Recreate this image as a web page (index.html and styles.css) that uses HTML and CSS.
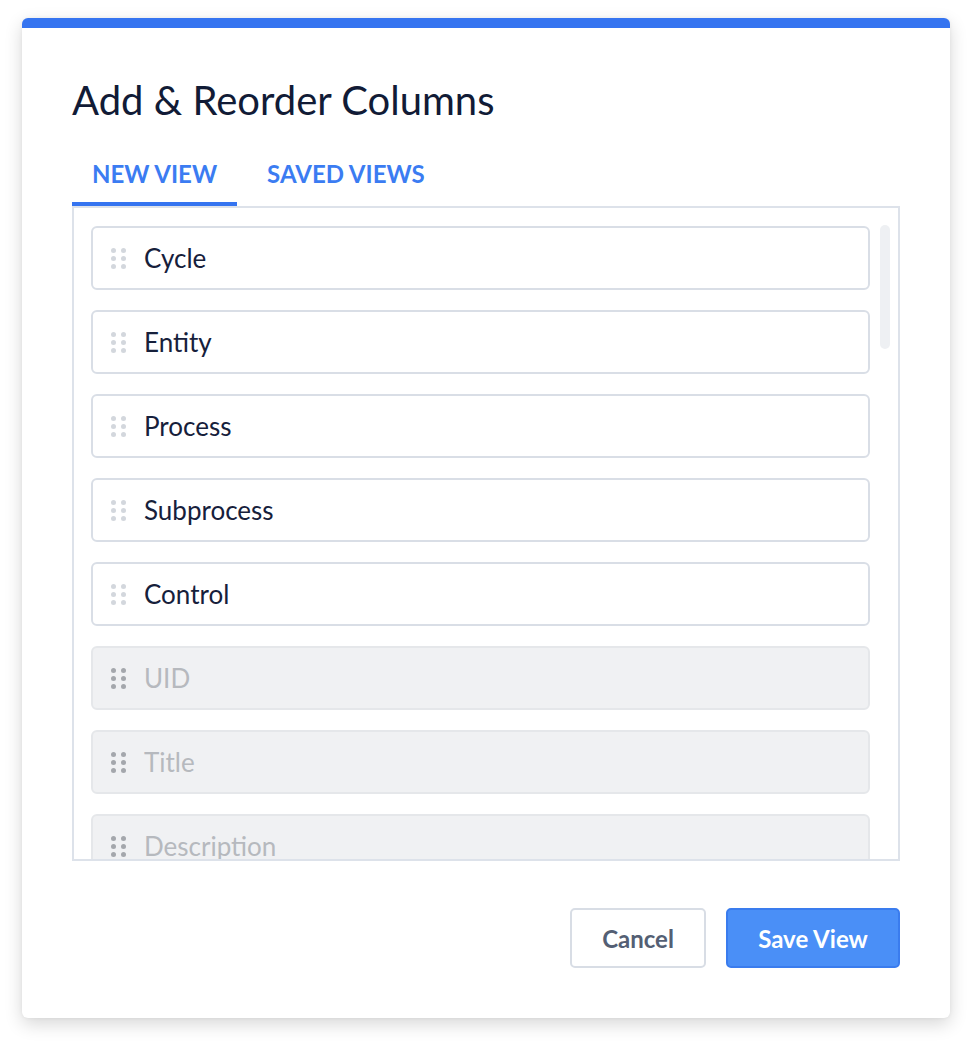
FILE: index.html
```html
<!DOCTYPE html>
<html lang="en">
<head>
<meta charset="utf-8">
<title>Add &amp; Reorder Columns</title>
<link rel="stylesheet" href="styles.css">
</head>
<body>
<div class="page">
  <div class="modal">
    <h1 class="title">Add &amp; Reorder Columns</h1>
    <div class="tabs">
      <div class="tab active">NEW VIEW</div>
      <div class="tab">SAVED VIEWS</div>
    </div>
    <div class="list-box">
      <ul class="list">
        <li class="item"><span class="handle"><i></i><i></i><i></i><i></i><i></i><i></i></span><span class="label">Cycle</span></li>
        <li class="item"><span class="handle"><i></i><i></i><i></i><i></i><i></i><i></i></span><span class="label">Entity</span></li>
        <li class="item"><span class="handle"><i></i><i></i><i></i><i></i><i></i><i></i></span><span class="label">Process</span></li>
        <li class="item"><span class="handle"><i></i><i></i><i></i><i></i><i></i><i></i></span><span class="label">Subprocess</span></li>
        <li class="item"><span class="handle"><i></i><i></i><i></i><i></i><i></i><i></i></span><span class="label">Control</span></li>
        <li class="item off"><span class="handle"><i></i><i></i><i></i><i></i><i></i><i></i></span><span class="label">UID</span></li>
        <li class="item off"><span class="handle"><i></i><i></i><i></i><i></i><i></i><i></i></span><span class="label">Title</span></li>
        <li class="item off"><span class="handle"><i></i><i></i><i></i><i></i><i></i><i></i></span><span class="label">Description</span></li>
      </ul>
      <div class="thumb"></div>
    </div>
    <div class="actions">
      <button class="btn btn-cancel">Cancel</button>
      <button class="btn btn-save">Save View</button>
    </div>
  </div>
</div>
</body>
</html>
```
FILE: styles.css
```css
html, body {
  margin: 0;
  padding: 0;
  background: #ffffff;
}
body {
  font-family: Lato, "Noto Sans", sans-serif;
}
.page {
  padding: 18px 22px 26px 22px;
}
.modal {
  box-sizing: border-box;
  width: 928px;
  height: 1000px;
  background: #ffffff;
  border-top: 10px solid #3574f0;
  border-radius: 6px;
  box-shadow: 0 6px 18px rgba(0, 0, 0, 0.16), 0 0 4px rgba(0, 0, 0, 0.05);
  padding: 0 50px;
  display: flex;
  flex-direction: column;
}
.title {
  margin: 48px 0 0 0;
  font-size: 40px;
  line-height: 48px;
  font-weight: 400;
  color: #111b36;
  letter-spacing: 0;
}
.tabs {
  display: flex;
  margin-top: 24px;
}
.tab {
  padding: 12px 20px 14px 20px;
  font-size: 24px;
  line-height: 28px;
  font-weight: 700;
  color: #3b7cf2;
  border-bottom: 4px solid transparent;
  margin-right: 10px;
}
.tab.active {
  border-bottom-color: #3574f0;
}
.list-box {
  position: relative;
  box-sizing: border-box;
  height: 655px;
  border: 2px solid #dde2ea;
  overflow: hidden;
}
.list {
  list-style: none;
  margin: 0;
  padding: 18px 28px 0 17px;
  display: flex;
  flex-direction: column;
  gap: 20px;
}
.item {
  box-sizing: border-box;
  height: 64px;
  flex: 0 0 64px;
  border: 2px solid #d9dee6;
  border-radius: 6px;
  background: #ffffff;
  display: flex;
  align-items: center;
  padding-left: 18px;
}
.item.off {
  background: #f0f1f3;
  border-color: #e5e7ea;
}
.handle {
  display: grid;
  grid-template-columns: 5px 5px;
  grid-template-rows: 5px 5px 5px;
  column-gap: 5px;
  row-gap: 3px;
  margin-right: 18px;
}
.handle i {
  display: block;
  width: 5px;
  height: 5px;
  border-radius: 50%;
  background: #d3d7dd;
}
.item.off .handle i {
  background: #a4a7ac;
}
.label {
  font-size: 26px;
  line-height: 32px;
  color: #16203b;
}
.item.off .label {
  color: #b6b9be;
}
.thumb {
  position: absolute;
  top: 17px;
  right: 8px;
  width: 10px;
  height: 124px;
  border-radius: 5px;
  background: #eef0f3;
}
.actions {
  display: flex;
  justify-content: flex-end;
  gap: 20px;
  margin-top: 47px;
}
.btn {
  box-sizing: border-box;
  height: 60px;
  border-radius: 5px;
  font-family: Lato, "Noto Sans", sans-serif;
  font-size: 24px;
  font-weight: 700;
  cursor: pointer;
}
.btn-cancel {
  width: 136px;
  background: #ffffff;
  border: 2px solid #d8dde5;
  color: #545f74;
}
.btn-save {
  width: 174px;
  background: #4a8ff7;
  border: 2px solid #3a7cee;
  color: #ffffff;
}
```
